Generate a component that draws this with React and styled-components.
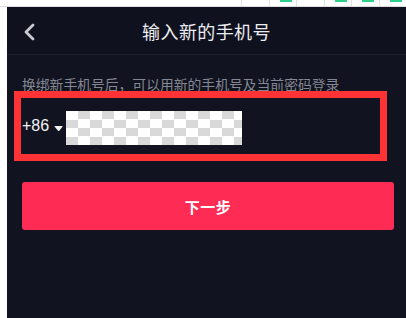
import styled, { createGlobalStyle } from "styled-components";

const GlobalStyle = createGlobalStyle`
  html, body {
    margin: 0;
    padding: 0;
    background: #ffffff;
  }
  body {
    font-family: "Noto Sans CJK SC", "Liberation Sans", sans-serif;
    overflow: hidden;
  }
`;

const App = () => {
  // cells of the page peeking in above the phone capture
  const cells = [false, true, false, true, true, true];

  return (
    <Page>
      <GlobalStyle />
      <TopStrip>
        {cells.map((green, i) => (
          <Cell key={i} $green={green} />
        ))}
      </TopStrip>
      <Row>
        <Gutter />
        <Screen>
          <Header>
            <Back>
              <svg width="14" height="18" viewBox="0 0 14 18">
                <path
                  d="M11 2 L4 9 L11 16"
                  fill="none"
                  stroke="#c9cad0"
                  strokeWidth="2.8"
                  strokeLinecap="round"
                  strokeLinejoin="round"
                />
              </svg>
            </Back>
            <Title>输入新的手机号</Title>
          </Header>
          <Content>
            <Hint>换绑新手机号后，可以用新的手机号及当前密码登录</Hint>
            <Field>
              <Code>+86</Code>
              <Caret />
              <Masked />
            </Field>
            <NextButton>下一步</NextButton>
          </Content>
        </Screen>
      </Row>
    </Page>
  );
};

export default App;

const Page = styled.div`
  width: 406px;
  height: 318px;
  display: flex;
  flex-direction: column;
`;

const TopStrip = styled.div`
  height: 7px;
  display: flex;
  padding-left: 241px;
  box-sizing: border-box;
  border-bottom: 1px solid #dcdcdc;
`;

const Cell = styled.div`
  width: 32px;
  border-left: 1px solid #e2e2e2;
  position: relative;
  &::before {
    content: "";
    display: ${(p) => (p.$green ? "block" : "none")};
    position: absolute;
    top: 0;
    left: 10px;
    width: 12px;
    height: 2px;
    background: #2ed18b;
  }
`;

const Row = styled.div`
  flex: 1;
  display: flex;
`;

const Gutter = styled.div`
  width: 7px;
  background: #ffffff;
`;

const Screen = styled.div`
  flex: 1;
  background: #111320;
  display: flex;
  flex-direction: column;
`;

const Header = styled.div`
  height: 47px;
  display: flex;
  align-items: center;
  justify-content: center;
  position: relative;
  background: #0f111e;
  border-bottom: 1px solid #1b1d2b;
`;

const Back = styled.div`
  position: absolute;
  left: 15px;
  top: 16px;
  display: flex;
`;

const Title = styled.div`
  color: #ecedf0;
  font-size: 18px;
  line-height: 20px;
  letter-spacing: 0.4px;
`;

const Content = styled.div`
  padding: 0 12px 0 15px;
  display: flex;
  flex-direction: column;
`;

const Hint = styled.div`
  margin-top: 21px;
  color: #858793;
  font-size: 13.8px;
  line-height: 16px;
`;

const Field = styled.div`
  margin: -1px 7px 0 -8px;
  height: 70px;
  box-sizing: border-box;
  border: 7px solid #ff3236;
  display: flex;
  align-items: center;
  padding-left: 1px;
`;

const Code = styled.span`
  color: #f2f2f4;
  font-family: "Liberation Sans", sans-serif;
  font-size: 16px;
  line-height: 18px;
`;

const Caret = styled.span`
  margin-left: 5px;
  margin-top: 5px;
  width: 9px;
  height: 5px;
  background: #f2f2f4;
  clip-path: polygon(0 0, 100% 0, 55% 100%, 45% 100%);
  border-radius: 1px;
`;

const Masked = styled.div`
  margin-left: 3px;
  margin-top: 3px;
  width: 176px;
  height: 34px;
  background: repeating-conic-gradient(#d9d9d9 0 25%, #ffffff 0 50%) 0 0 / 24px 17px;
`;

const NextButton = styled.button`
  margin-top: 21px;
  height: 48px;
  border: none;
  border-radius: 3px;
  background: #fe2c55;
  color: #ffffff;
  font-family: "Noto Sans CJK SC", sans-serif;
  font-size: 15px;
  font-weight: 700;
  letter-spacing: 0.5px;
  cursor: pointer;
`;
